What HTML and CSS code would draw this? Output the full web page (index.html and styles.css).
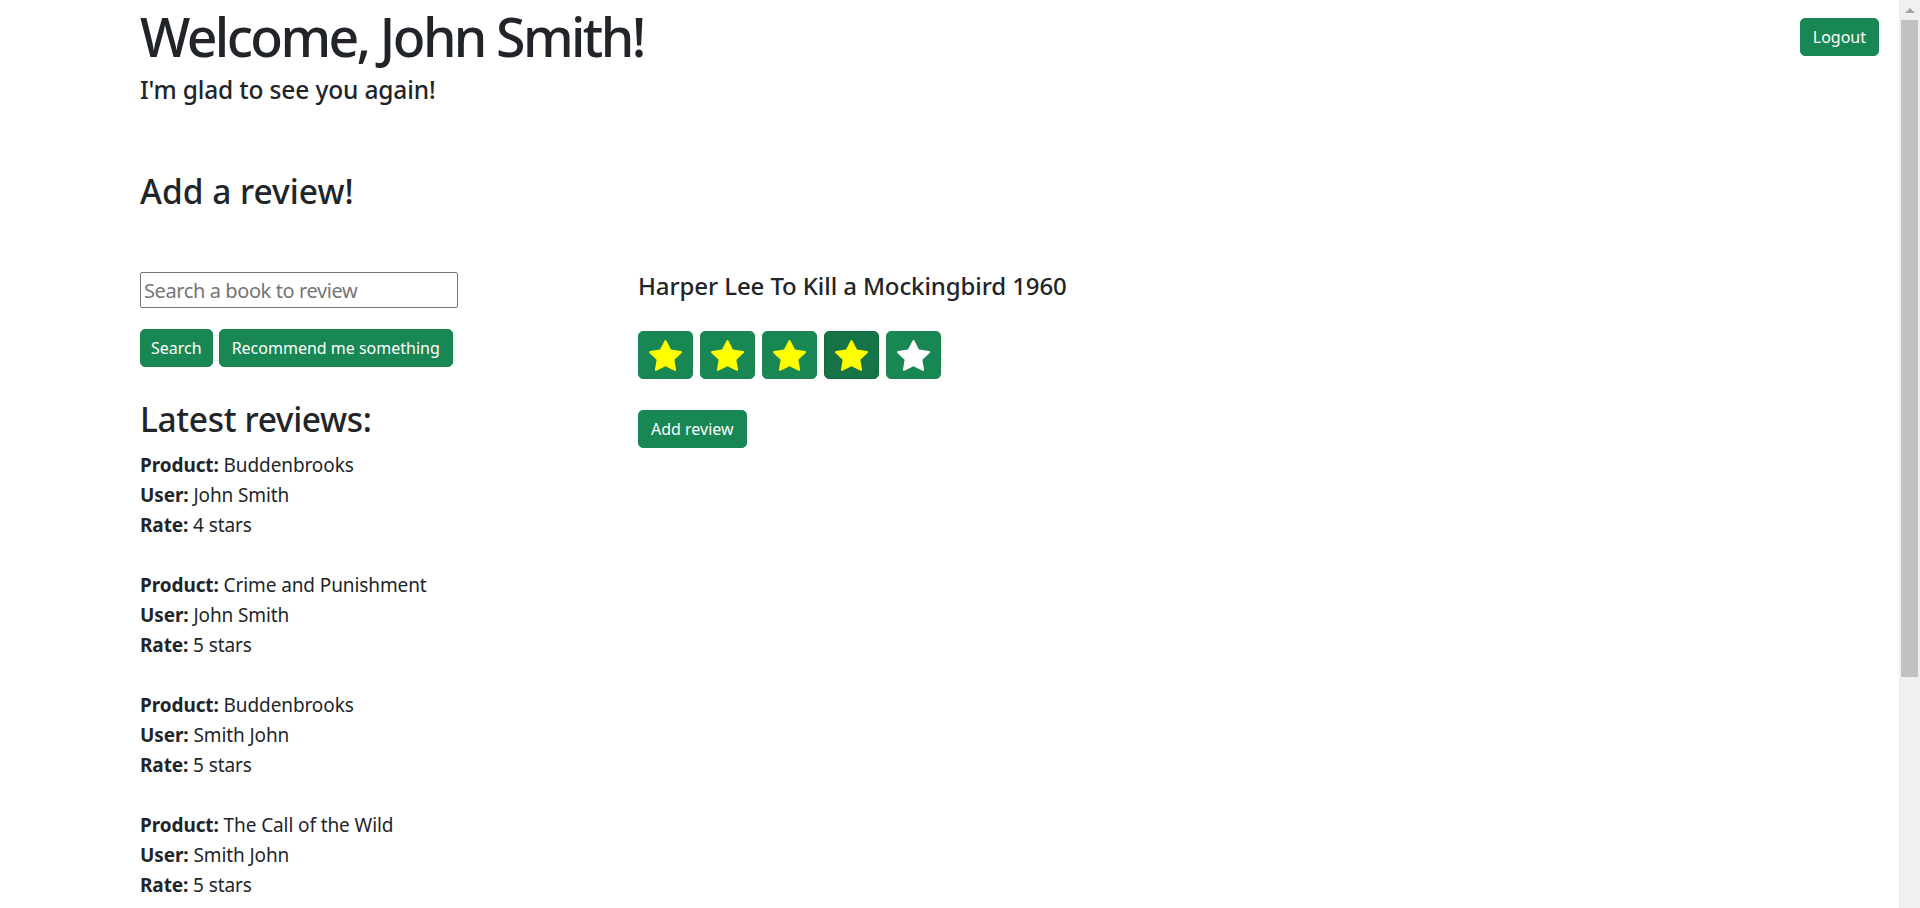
FILE: index.html
```html
<!DOCTYPE html>
<html lang="en">
<head>
<meta charset="utf-8">
<title>Reviews</title>
<link rel="stylesheet" href="styles.css">
</head>
<body>
<svg class="defs" width="0" height="0" aria-hidden="true">
  <symbol id="star" viewBox="0 0 16 16">
    <path d="M3.612 15.443c-.386.198-.824-.149-.746-.592l.83-4.73L.173 6.765c-.329-.314-.158-.888.283-.95l4.898-.696L7.538.792c.197-.39.73-.39.927 0l2.184 4.327 4.898.696c.441.062.612.636.282.95l-3.522 3.356.83 4.73c.078.443-.36.79-.746.592L8 13.187l-4.389 2.256z"/>
  </symbol>
</svg>
<header class="top">
  <div class="intro">
    <h1 class="welcome">Welcome, John Smith!</h1>
    <h4 class="subtitle">I'm glad to see you again!</h4>
  </div>
  <button class="btn logout">Logout</button>
</header>
<main class="page">
  <h2 class="section-title">Add a review!</h2>
  <div class="row">
    <div class="col-left">
      <input class="search" type="text" placeholder="Search a book to review">
      <div class="actions">
        <button class="btn btn-search">Search</button>
        <button class="btn">Recommend me something</button>
      </div>
      <h2 class="latest">Latest reviews:</h2>
      <div class="reviews">
        <div class="review"><b>Product:</b> Buddenbrooks<br><b>User:</b> John Smith<br><b>Rate:</b> 4 stars</div>
        <div class="review"><b>Product:</b> Crime and Punishment<br><b>User:</b> John Smith<br><b>Rate:</b> 5 stars</div>
        <div class="review"><b>Product:</b> Buddenbrooks<br><b>User:</b> Smith John<br><b>Rate:</b> 5 stars</div>
        <div class="review"><b>Product:</b> The Call of the Wild<br><b>User:</b> Smith John<br><b>Rate:</b> 5 stars</div>
      </div>
    </div>
    <div class="col-right">
      <h4 class="book">Harper Lee To Kill a Mockingbird 1960</h4>
      <div class="stars">
        <button class="btn star-btn"><svg class="star on"><use href="#star"/></svg></button>
        <button class="btn star-btn"><svg class="star on"><use href="#star"/></svg></button>
        <button class="btn star-btn"><svg class="star on"><use href="#star"/></svg></button>
        <button class="btn star-btn active"><svg class="star on"><use href="#star"/></svg></button>
        <button class="btn star-btn"><svg class="star off"><use href="#star"/></svg></button>
      </div>
      <button class="btn add">Add review</button>
    </div>
  </div>
</main>
<div class="scrollbar" aria-hidden="true">
  <div class="scroll-up"></div>
  <div class="scroll-thumb"></div>
</div>
</body>
</html>
```
FILE: styles.css
```css
html {
  background: #fff;
}
body {
  margin: 0;
  font-family: "Noto Sans", "Open Sans", sans-serif;
  color: #212529;
  font-size: 16px;
  line-height: 1.5;
}
.defs {
  position: absolute;
}

/* replica of the classic browser scrollbar */
.scrollbar {
  position: fixed;
  top: 0;
  right: 0;
  width: 21px;
  height: 100vh;
  background: #f0f0f0;
  display: flex;
  flex-direction: column;
  align-items: center;
}
.scroll-up {
  flex: none;
  width: 17px;
  height: 20px;
  display: flex;
  align-items: center;
  justify-content: center;
}
.scroll-up::before {
  content: "";
  width: 0;
  height: 0;
  border-left: 5px solid transparent;
  border-right: 5px solid transparent;
  border-bottom: 5px solid #a3a3a3;
}
.scroll-thumb {
  flex: none;
  width: 17px;
  height: 657px;
  background: #c1c1c1;
}

.top {
  display: flex;
  justify-content: space-between;
  align-items: flex-start;
  padding: 0 41px 0 140px;
}
.welcome {
  margin: 0;
  font-size: 53.5px;
  font-weight: 500;
  line-height: 73px;
  letter-spacing: -2.6px;
}
.subtitle {
  margin: 0;
  font-size: 24.5px;
  font-weight: 500;
  line-height: 34px;
  letter-spacing: -0.15px;
}
.btn {
  font-family: inherit;
  font-size: 16px;
  line-height: 24px;
  padding: 6px 12px;
  color: #fff;
  background: #198754;
  border: 1px solid #198754;
  border-radius: 5px;
  cursor: pointer;
}
.btn-search {
  padding: 6px 10px;
}
.logout {
  margin-top: 18px;
}
.page {
  padding: 0 0 330px 140px;
}
.section-title {
  margin: 64px 0 0;
  font-size: 33.5px;
  font-weight: 500;
  line-height: 40.2px;
}
.row {
  display: flex;
  margin-top: 61px;
}
.col-left {
  width: 498px;
  flex: none;
}
.col-right {
  flex: 1;
}
.search {
  display: block;
  box-sizing: border-box;
  width: 318px;
  height: 36px;
  margin: 0;
  padding: 1px 3px;
  font-family: inherit;
  font-size: 20px;
  letter-spacing: -0.4px;
  color: #212529;
  border: 1px solid #767676;
  border-radius: 2px;
}
.search::placeholder {
  color: #757575;
}
.actions {
  display: flex;
  gap: 6px;
  margin-top: 21px;
}
.latest {
  margin: 32px 0 0;
  font-size: 33.5px;
  font-weight: 500;
  line-height: 40.2px;
  letter-spacing: -0.35px;
}
.reviews {
  margin-top: 11px;
  font-size: 19px;
  line-height: 30px;
  letter-spacing: -0.1px;
}
.review {
  margin-bottom: 30px;
}
.review b {
  font-weight: 700;
}
.book {
  margin: 0;
  font-size: 24px;
  font-weight: 500;
  line-height: 28.8px;
  letter-spacing: -0.1px;
}
.stars {
  display: flex;
  gap: 7px;
  margin-top: 30px;
}
.star-btn {
  box-sizing: border-box;
  width: 55px;
  height: 48px;
  padding: 0;
  display: flex;
  align-items: center;
  justify-content: center;
}
.star-btn.active {
  background: #157347;
  border-color: #146c43;
}
.star {
  width: 33px;
  height: 33px;
}
.star.on {
  fill: #ffff00;
}
.star.off {
  fill: #ffffff;
}
.add {
  margin-top: 31px;
}
```
